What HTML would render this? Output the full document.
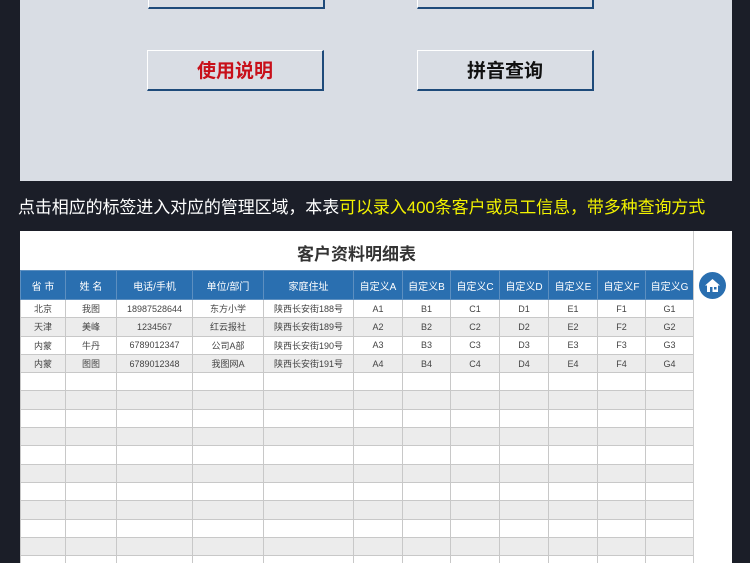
<!DOCTYPE html>
<html><head><meta charset="utf-8"><style>
*{margin:0;padding:0;box-sizing:border-box}
html{width:750px;height:563px;overflow:hidden}
body{width:750px;height:563px;background:#1b1e28;position:relative;overflow:hidden;font-family:"Liberation Sans","Noto Sans CJK SC",sans-serif}
.panel{position:absolute;left:20px;top:0;width:712px;height:181px;background:#d9dde4}
.btn{position:absolute;width:177px;height:41px;background:#d9dde4;border-top:1px solid #fff;border-left:1px solid #fff;border-right:2px solid #1e4a7a;border-bottom:2px solid #1e4a7a;text-align:center;line-height:38px;font-size:19px;font-weight:bold;font-family:"Noto Sans CJK SC",sans-serif}
.txt{position:absolute;left:18px;top:193px;font-size:17px;color:#fff;white-space:nowrap;letter-spacing:-0.1px}
.txt span{color:#f2f200}
.white{position:absolute;left:20px;top:231px;width:712px;height:332px;background:#fff}
.title{position:absolute;left:20px;width:673px;top:240px;text-align:center;font-size:17px;font-weight:bold;color:#333}
.tw{position:absolute;left:20px;top:270px;width:673px;height:293px;overflow:hidden}
table{border-collapse:collapse;width:673px;table-layout:fixed}
td,th{border:1px solid #c8c8c8;font-size:9px;text-align:center;color:#444;height:18.3px;padding:0;font-weight:normal}
th{background:#2a6fb0;color:#fff;height:29px;border-color:#5d8fc0;font-size:10px}
tr.g td{background:#ececec}
.vl{position:absolute;left:693px;top:231px;width:1px;height:332px;background:#ccc}
.home{position:absolute;left:699px;top:272px;width:27px;height:27px;border-radius:50%;background:#2a6fb0}
</style></head><body>
<div class="panel"></div>
<div class="btn" style="left:148px;top:-32px"></div>
<div class="btn" style="left:417px;top:-32px"></div>
<div class="btn" style="left:147px;top:50px;color:#c8101a">使用说明</div>
<div class="btn" style="left:417px;top:50px;color:#111">拼音查询</div>
<div class="txt">点击相应的标签进入对应的管理区域，本表<span>可以录入400条客户或员工信息，带多种查询方式</span></div>
<div class="white"></div>
<div class="vl"></div>
<div class="title">客户资料明细表</div>
<div class="tw"><table>
<colgroup><col style="width:45px"><col style="width:51px"><col style="width:76px"><col style="width:71px"><col style="width:90px"><col style="width:49px"><col style="width:48px"><col style="width:49px"><col style="width:49px"><col style="width:49px"><col style="width:48px"><col style="width:48px"></colgroup>
<tr><th>省 市</th><th>姓 名</th><th>电话/手机</th><th>单位/部门</th><th>家庭住址</th><th>自定义A</th><th>自定义B</th><th>自定义C</th><th>自定义D</th><th>自定义E</th><th>自定义F</th><th>自定义G</th></tr>
<tr><td>北京</td><td>我图</td><td>18987528644</td><td>东方小学</td><td>陕西长安街188号</td><td>A1</td><td>B1</td><td>C1</td><td>D1</td><td>E1</td><td>F1</td><td>G1</td></tr>
<tr class="g"><td>天津</td><td>美峰</td><td>1234567</td><td>红云报社</td><td>陕西长安街189号</td><td>A2</td><td>B2</td><td>C2</td><td>D2</td><td>E2</td><td>F2</td><td>G2</td></tr>
<tr><td>内蒙</td><td>牛丹</td><td>6789012347</td><td>公司A部</td><td>陕西长安街190号</td><td>A3</td><td>B3</td><td>C3</td><td>D3</td><td>E3</td><td>F3</td><td>G3</td></tr>
<tr class="g"><td>内蒙</td><td>图图</td><td>6789012348</td><td>我图网A</td><td>陕西长安街191号</td><td>A4</td><td>B4</td><td>C4</td><td>D4</td><td>E4</td><td>F4</td><td>G4</td></tr>
<tr><td></td><td></td><td></td><td></td><td></td><td></td><td></td><td></td><td></td><td></td><td></td><td></td></tr>
<tr class="g"><td></td><td></td><td></td><td></td><td></td><td></td><td></td><td></td><td></td><td></td><td></td><td></td></tr>
<tr><td></td><td></td><td></td><td></td><td></td><td></td><td></td><td></td><td></td><td></td><td></td><td></td></tr>
<tr class="g"><td></td><td></td><td></td><td></td><td></td><td></td><td></td><td></td><td></td><td></td><td></td><td></td></tr>
<tr><td></td><td></td><td></td><td></td><td></td><td></td><td></td><td></td><td></td><td></td><td></td><td></td></tr>
<tr class="g"><td></td><td></td><td></td><td></td><td></td><td></td><td></td><td></td><td></td><td></td><td></td><td></td></tr>
<tr><td></td><td></td><td></td><td></td><td></td><td></td><td></td><td></td><td></td><td></td><td></td><td></td></tr>
<tr class="g"><td></td><td></td><td></td><td></td><td></td><td></td><td></td><td></td><td></td><td></td><td></td><td></td></tr>
<tr><td></td><td></td><td></td><td></td><td></td><td></td><td></td><td></td><td></td><td></td><td></td><td></td></tr>
<tr class="g"><td></td><td></td><td></td><td></td><td></td><td></td><td></td><td></td><td></td><td></td><td></td><td></td></tr>
<tr><td></td><td></td><td></td><td></td><td></td><td></td><td></td><td></td><td></td><td></td><td></td><td></td></tr>
</table></div>
<div class="home"><svg width="27" height="27" viewBox="0 0 27 27"><path d="M6 13.5 L13.5 7 L21 13.5 L19 13.5 L19 20 L8 20 L8 13.5 Z" fill="#fff"/><rect x="11" y="15" width="2.5" height="5" fill="#2a6fb0"/><rect x="15" y="15" width="2.5" height="2.5" fill="#2a6fb0"/></svg></div>
</body></html>
